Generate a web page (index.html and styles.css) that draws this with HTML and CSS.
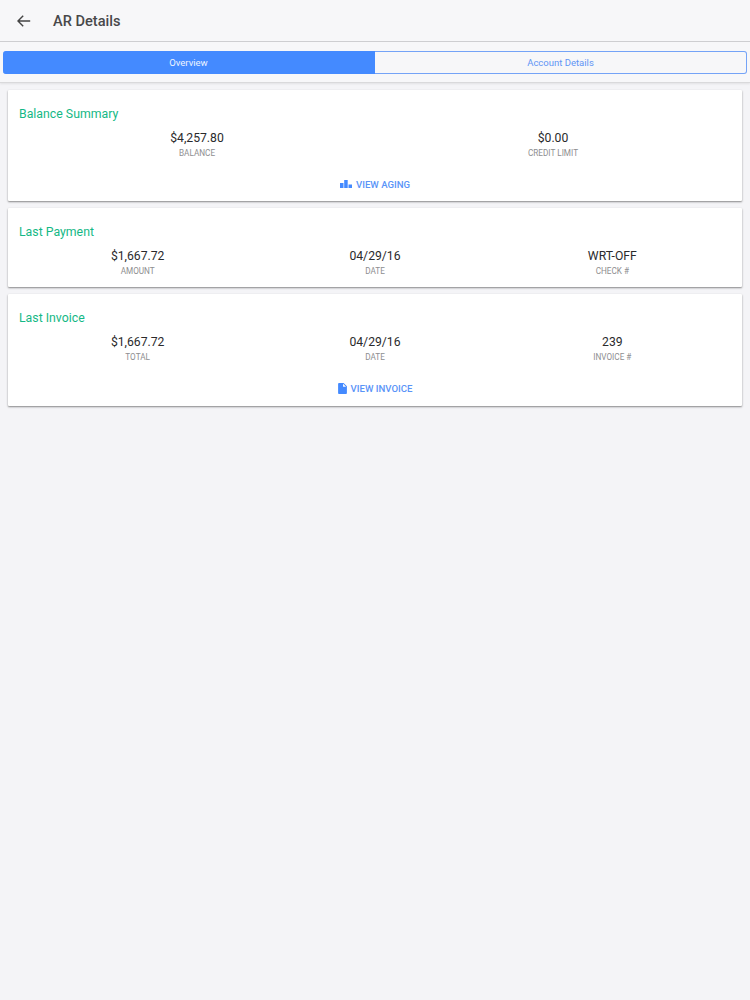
FILE: index.html
```html
<!DOCTYPE html>
<html lang="en">
<head>
    <meta charset="UTF-8">
    <meta name="viewport" content="width=device-width, initial-scale=1.0">
    <title>AR Details</title>
    <link rel="stylesheet" href="styles.css">
</head>
<body>

<header class="toolbar">
    <svg class="back-icon" viewBox="0 0 18 18" width="18" height="18">
        <path d="M15.2 9H3.2M8.2 3.8L3 9l5.2 5.2"/>
    </svg>
    <h1 class="page-title">AR Details</h1>
</header>

<div class="tabs-bar">
    <div class="tabs">
        <div class="tab tab-active">Overview</div>
        <div class="tab">Account Details</div>
    </div>
</div>

<main class="content">
    <section class="card">
        <h2 class="card-title">Balance Summary</h2>
        <div class="stats">
            <div class="stat">
                <div class="stat-value">$4,257.80</div>
                <div class="stat-label">BALANCE</div>
            </div>
            <div class="stat">
                <div class="stat-value">$0.00</div>
                <div class="stat-label">CREDIT LIMIT</div>
            </div>
        </div>
        <div class="card-action">
            <svg class="action-icon" viewBox="0 0 12 8" width="12" height="8">
                <rect x="0" y="3" width="3.5" height="5"/>
                <rect x="4.2" y="0" width="3.5" height="8"/>
                <rect x="8.5" y="4.5" width="3.5" height="3.5"/>
            </svg>
            VIEW AGING
        </div>
    </section>

    <section class="card">
        <h2 class="card-title">Last Payment</h2>
        <div class="stats">
            <div class="stat">
                <div class="stat-value">$1,667.72</div>
                <div class="stat-label">AMOUNT</div>
            </div>
            <div class="stat">
                <div class="stat-value">04/29/16</div>
                <div class="stat-label">DATE</div>
            </div>
            <div class="stat">
                <div class="stat-value">WRT-OFF</div>
                <div class="stat-label">CHECK #</div>
            </div>
        </div>
    </section>

    <section class="card card-invoice">
        <h2 class="card-title">Last Invoice</h2>
        <div class="stats">
            <div class="stat">
                <div class="stat-value">$1,667.72</div>
                <div class="stat-label">TOTAL</div>
            </div>
            <div class="stat">
                <div class="stat-value">04/29/16</div>
                <div class="stat-label">DATE</div>
            </div>
            <div class="stat">
                <div class="stat-value">239</div>
                <div class="stat-label">INVOICE #</div>
            </div>
        </div>
        <div class="card-action">
            <svg class="action-icon" viewBox="0 0 16 20" width="9" height="11">
                <path d="M2 0C.9 0 0 .9 0 2v16c0 1.1.9 2 2 2h12c1.1 0 2-.9 2-2V6l-6-6H2zm7 7V1.5L14.5 7H9z"/>
            </svg>
            VIEW INVOICE
        </div>
    </section>
</main>

</body>
</html>
```

FILE: styles.css
```css
* {
    box-sizing: border-box;
}

body {
    font-family: Roboto, Arial, sans-serif;
    background-color: #f4f4f7;
    margin: 0;
    padding: 0;
    min-height: 1000px;
}

.toolbar {
    height: 42px;
    display: flex;
    align-items: center;
    padding-left: 15px;
    background-color: #f7f7f9;
    border-bottom: 1px solid #cfcfd2;
}

.back-icon {
    fill: none;
    stroke: #444;
    stroke-width: 1.4;
}

.page-title {
    margin: 0 0 0 20px;
    font-size: 14.6px;
    font-weight: 500;
    color: #48484a;
}

.tabs-bar {
    height: 41px;
    padding: 9px 3px 0;
    background-color: #f7f7f9;
    border-bottom: 1px solid #d9d9db;
    box-shadow: 0 1px 2px rgba(0, 0, 0, 0.08);
}

.tabs {
    display: flex;
    height: 23px;
}

.tab {
    flex: 1;
    display: flex;
    align-items: center;
    justify-content: center;
    font-size: 9.5px;
    color: #5f95f5;
    border: 1px solid #74a3f7;
    border-left: none;
    border-radius: 0 3px 3px 0;
}

.tab-active {
    color: #eef4ff;
    background-color: #448aff;
    border-color: #448aff;
    border-radius: 3px 0 0 3px;
}

.content {
    padding: 7px 8px 0;
}

.card {
    background-color: #fff;
    padding: 16px 11px 0;
    margin-bottom: 7px;
    box-shadow: 0 1px 2px rgba(0, 0, 0, 0.45);
    border-radius: 1px;
}

.card-invoice {
    padding-bottom: 1px;
}

.card-title {
    margin: 0 0 8px;
    font-size: 12.3px;
    line-height: 16px;
    font-weight: 400;
    color: #14b885;
}

.stats {
    display: flex;
    padding-bottom: 11px;
}

.stat {
    flex: 1;
    text-align: center;
}

.stat-value {
    font-size: 12.2px;
    line-height: 16px;
    color: #2a2a2c;
}

.stat-label {
    margin-top: 2px;
    font-size: 8.2px;
    line-height: 10px;
    color: #8e8e90;
}

.card-action {
    height: 32px;
    padding-bottom: 2px;
    display: flex;
    align-items: center;
    justify-content: center;
    gap: 4px;
    font-size: 9.6px;
    font-weight: 500;
    color: #5a94f8;
}

.action-icon {
    fill: #448aff;
}
```
